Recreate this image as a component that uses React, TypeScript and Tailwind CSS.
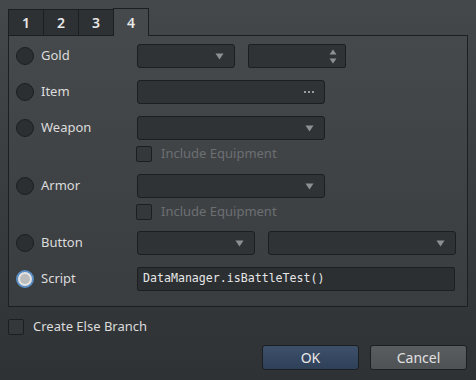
const Arrow = () => (
  <svg width="9" height="7" viewBox="0 0 9 7" className="shrink-0">
    <path d="M0.5 0.5 H8.5 L4.5 6.5 Z" fill="#8d9093" />
  </svg>
);

const Combo = ({ w }: { w: string }) => (
  <div
    className={`${w} h-6 flex items-center justify-end pr-[10px] rounded-[3px] border border-[#1c1e20] bg-[#303336]`}
  >
    <Arrow />
  </div>
);

const Radio = ({ checked }: { checked?: boolean }) =>
  checked ? (
    <div className="w-[18px] h-[18px] rounded-full border-2 border-[#5a8ec4] bg-[#e4e4e4] flex items-center justify-center">
      <div className="w-[10px] h-[10px] rounded-full bg-[#bcbcbc]" />
    </div>
  ) : (
    <div className="w-[18px] h-[18px] rounded-full border border-[#1c1e20] bg-[#2c2f32]" />
  );

const Check = () => (
  <div className="w-4 h-4 rounded-[2px] border border-[#1c1e20] bg-[#35383b]" />
);

const Row = ({
  label,
  checked,
  children,
}: {
  label: string;
  checked?: boolean;
  children: React.ReactNode;
}) => (
  <div className="flex items-center h-6">
    <div className="w-[121px] flex items-center gap-[7px]">
      <Radio checked={checked} />
      <span className="text-[#dcdcdc]">{label}</span>
    </div>
    {children}
  </div>
);

const SubCheck = ({ label }: { label: string }) => (
  <div className="flex items-center h-4 pl-[120px] gap-[9px]">
    <Check />
    <span className="text-[#6c6f72]">{label}</span>
  </div>
);

export default function App() {
  return (
    <div
      className="w-[476px] h-[380px] bg-gradient-to-b from-[#45484b] to-[#2f3235] px-2 pt-[9px] text-[13px]"
      style={{ fontFamily: '"Noto Sans", "Open Sans", sans-serif' }}
    >
      <div className="flex relative z-10 -mb-px">
        {["1", "2", "3"].map((t) => (
          <div
            key={t}
            className="w-[35px] h-[27px] border border-r-0 border-[#1c1e20] bg-[#2e3134] flex items-center justify-center text-[14px] text-[#e8e8e8] font-semibold"
          >
            {t}
          </div>
        ))}
        <div className="w-[36px] h-[28px] -mt-px border border-b-0 border-[#1c1e20] bg-[#46494c] flex items-center justify-center text-[14px] text-[#e8e8e8] font-semibold">
          4
        </div>
      </div>
      <div className="w-[460px] h-[272px] border border-[#1c1e20] bg-gradient-to-b from-[#46494c] to-[#3a3d40] pt-2 pl-[7px] flex flex-col">
        <Row label="Gold">
          <div className="flex gap-[13px]">
            <Combo w="w-[98px]" />
            <div className="w-[98px] h-6 flex items-center justify-end pr-[8px] rounded-[2px] border border-[#1c1e20] bg-[#303336]">
              <div className="flex flex-col gap-[3px]">
                <svg width="8" height="6" viewBox="0 0 8 6">
                  <path d="M0.5 5.5 H7.5 L4 0.5 Z" fill="#8d9093" />
                </svg>
                <svg width="8" height="6" viewBox="0 0 8 6">
                  <path d="M0.5 0.5 H7.5 L4 5.5 Z" fill="#8d9093" />
                </svg>
              </div>
            </div>
          </div>
        </Row>
        <div className="mt-3">
          <Row label="Item">
            <div className="w-[188px] h-6 flex items-center justify-end pr-[10px] gap-[2px] rounded-[3px] border border-[#1c1e20] bg-[#303336]">
              <span className="w-[2px] h-[2px] bg-[#9a9da0]" />
              <span className="w-[2px] h-[2px] bg-[#9a9da0]" />
              <span className="w-[2px] h-[2px] bg-[#9a9da0]" />
            </div>
          </Row>
        </div>
        <div className="mt-3">
          <Row label="Weapon">
            <Combo w="w-[188px]" />
          </Row>
        </div>
        <div className="mt-[6px]">
          <SubCheck label="Include Equipment" />
        </div>
        <div className="mt-3">
          <Row label="Armor">
            <Combo w="w-[188px]" />
          </Row>
        </div>
        <div className="mt-[6px]">
          <SubCheck label="Include Equipment" />
        </div>
        <div className="mt-[11px]">
          <Row label="Button">
            <div className="flex gap-[13px]">
              <Combo w="w-[118px]" />
              <Combo w="w-[188px]" />
            </div>
          </Row>
        </div>
        <div className="mt-3">
          <Row label="Script" checked>
            <div
              className="w-[318px] h-6 flex items-center pl-[5px] rounded-[2px] border border-[#1c1e20] bg-[#2c2f32] text-[#e6e6e6] text-[11.6px]"
              style={{ fontFamily: '"DejaVu Sans Mono", monospace' }}
            >
              DataManager.isBattleTest()
            </div>
          </Row>
        </div>
      </div>
      <div className="mt-[12px] flex items-center gap-[9px] h-4">
        <Check />
        <span className="text-[#dcdcdc]">Create Else Branch</span>
      </div>
      <div className="mt-[10px] flex justify-end gap-[11px] pr-px">
        <button className="w-[97px] h-[25px] rounded-[3px] border border-[#1c1e20] bg-gradient-to-b from-[#3d506a] to-[#2f4159] text-[#e8e8e8] text-[14px]">
          OK
        </button>
        <button className="w-[97px] h-[25px] rounded-[3px] border border-[#1c1e20] bg-gradient-to-b from-[#5a5d60] to-[#4f5255] text-[#e0e0e0] text-[14px]">
          Cancel
        </button>
      </div>
    </div>
  );
}
